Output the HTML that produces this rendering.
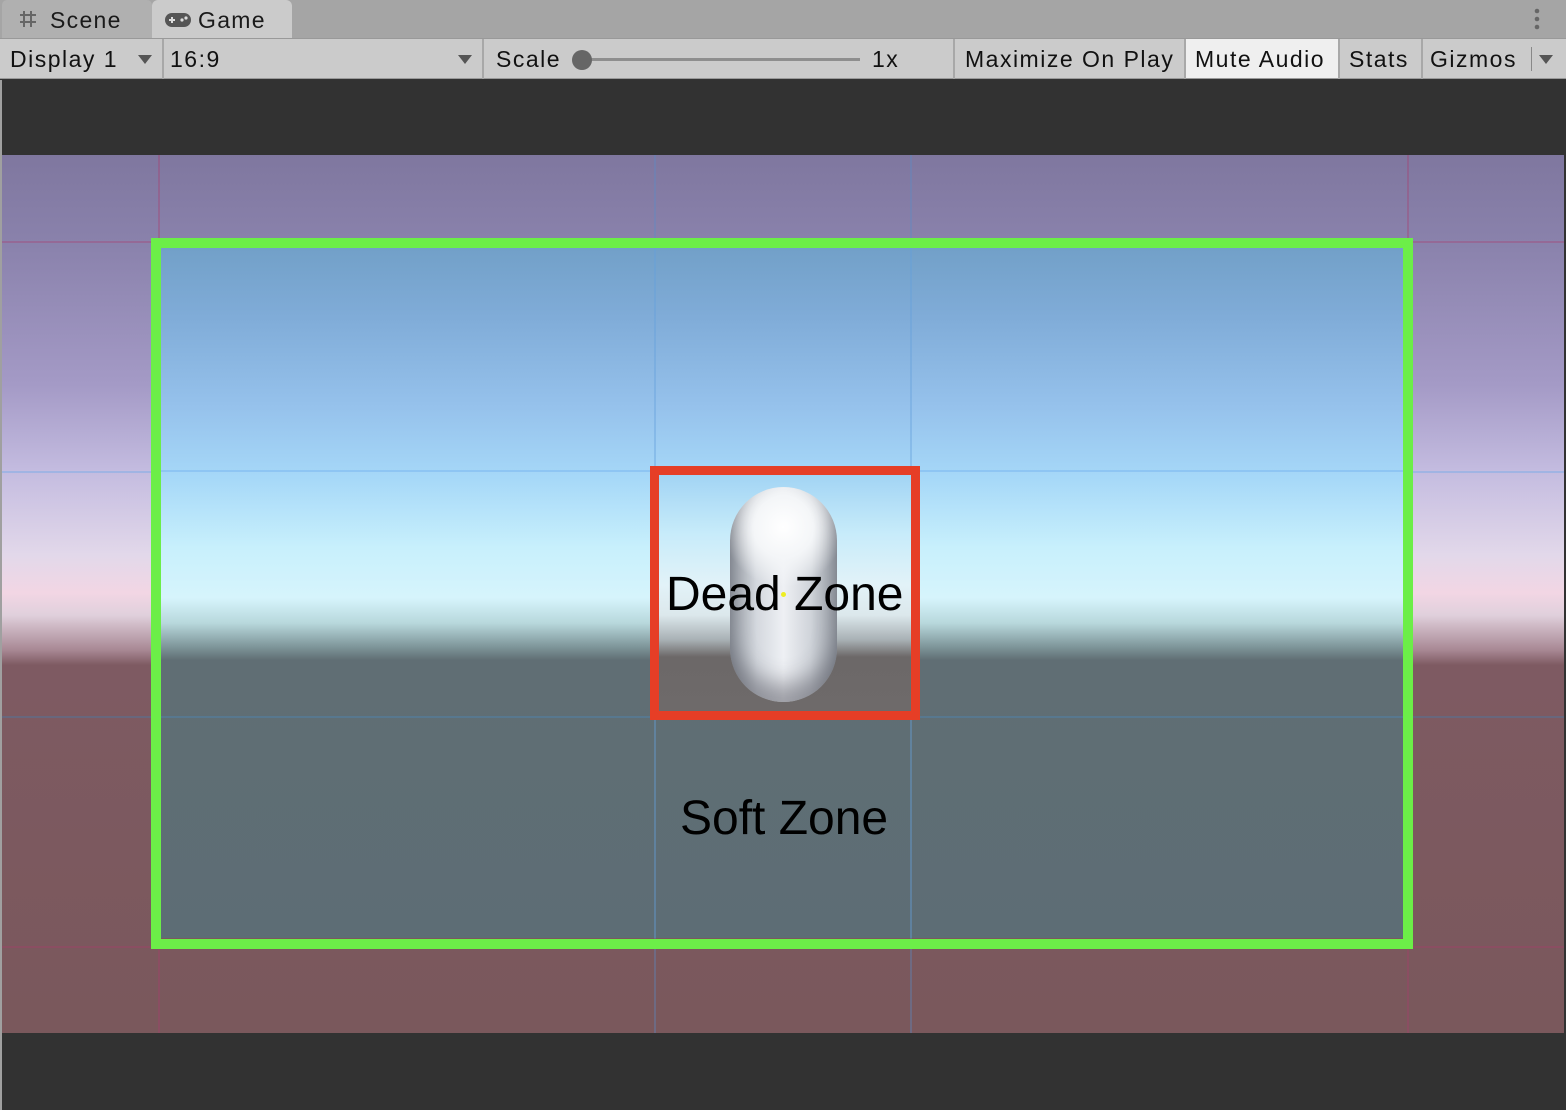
<!DOCTYPE html>
<html><head><meta charset="utf-8"><style>
*{margin:0;padding:0;box-sizing:border-box}
body{width:1566px;height:1110px;overflow:hidden;background:#323232;font-family:"Liberation Sans",sans-serif;position:relative}
.abs{position:absolute}
.tabbar{left:0;top:0;width:1566px;height:38px;background:#a5a5a5}
.tab{top:0;height:38px;font-size:23px;color:#1a1a1a;line-height:40px;letter-spacing:1.3px}
.toolbar{left:0;top:38px;width:1566px;height:41px;background:#cbcbcb;border-top:1px solid #999;border-bottom:1px solid #999}
.t{font-size:23px;color:#111;top:44px;line-height:30px;letter-spacing:1.5px}
.sep{top:39px;width:2px;height:40px;background:#a8a8a8}
.tri{width:0;height:0;border-left:7px solid transparent;border-right:7px solid transparent;border-top:9px solid #555}
.game{left:2px;top:155px;width:1562px;height:878px;background:linear-gradient(to bottom,#7f779f 0px,#8a82ac 90px,#a49ac6 230px,#c4bce0 317px,#e2d8ea 400px,#f2d6e4 438px,#e0d0dc 460px,#a88894 495px,#7e5a62 510px,#7a585c 878px)}
.vl{top:0;width:2px;height:878px;background:rgba(170,60,110,0.35)}
.hl{left:0;height:2px;width:1562px;background:rgba(170,60,110,0.35)}
.inner{left:161px;top:248px;width:1242px;height:690px;overflow:hidden;background:linear-gradient(to bottom,#72a0c8 0px,#80acd8 70px,#96c2ec 160px,#a6d8f8 230px,#c8f0fc 300px,#d6f4fc 350px,#b8d8dc 375px,#80989c 398px,#606e74 412px,#5d6d75 690px)}
.green{left:151px;top:238px;width:1262px;height:711px;border:10px solid #6cee48}
.red{left:650px;top:466px;width:270px;height:254px;border:9px solid #e63e26;overflow:hidden}
.redin{left:0;top:0;width:252px;height:236px;background:linear-gradient(to bottom,#a2d4f4 0px,#c8ecfa 60px,#e2f2f8 110px,#dce8ec 140px,#a8b0b4 165px,#6c6868 182px,#6e6a6a 236px)}
.cap{left:71px;top:12px;width:107px;height:215px;border-radius:54px;background:radial-gradient(ellipse 60px 60px at 50% 40px,#ffffff 0,#f4f6f8 50%,rgba(255,255,255,0) 100%),linear-gradient(to right,#9aa0a8 0,#d4d8de 25%,#eef0f4 50%,#d0d4da 75%,#9aa0a8 100%);box-shadow:inset 0 -18px 22px rgba(60,60,70,0.45)}
.lbl{font-size:48px;color:#000;white-space:nowrap}
</style></head><body>
<div class="abs tabbar"></div>
<div class="abs tab" style="left:2px;width:150px;background:#b0b0b0;border-radius:5px 5px 0 0"></div>
<div class="abs tab" style="left:152px;width:140px;background:#cbcbcb;border-radius:6px 6px 0 0"></div>
<svg class="abs" style="left:18px;top:9px" width="20" height="20" viewBox="0 0 20 20"><path d="M6 2V18M13 2V18M2 6H18M2 13H18" stroke="#666" stroke-width="2" fill="none"/></svg>
<div class="abs tab" style="left:50px">Scene</div>
<svg class="abs" style="left:164px;top:12px" width="28" height="16" viewBox="0 0 28 16"><rect x="1" y="1" width="26" height="14" rx="7" fill="#555"/><path d="M5 8H11M8 5V11" stroke="#ddd" stroke-width="2"/><circle cx="18" cy="8" r="1.6" fill="#ddd"/><circle cx="22" cy="6" r="1.6" fill="#ddd"/></svg>
<div class="abs tab" style="left:198px">Game</div>
<svg class="abs" style="left:1533px;top:8px" width="8" height="22"><circle cx="4" cy="3" r="2.3" fill="#666"/><circle cx="4" cy="11" r="2.3" fill="#666"/><circle cx="4" cy="19" r="2.3" fill="#666"/></svg>
<div class="abs toolbar"></div>
<div class="abs" style="left:1186px;top:39px;width:152px;height:39px;background:#efefef"></div>
<div class="abs t" style="left:10px">Display 1</div>
<div class="abs tri" style="left:138px;top:55px"></div>
<div class="abs sep" style="left:162px"></div>
<div class="abs t" style="left:170px">16:9</div>
<div class="abs tri" style="left:458px;top:55px"></div>
<div class="abs sep" style="left:482px"></div>
<div class="abs t" style="left:496px">Scale</div>
<div class="abs" style="left:580px;top:58px;width:280px;height:3px;background:#8e8e8e"></div>
<div class="abs" style="left:572px;top:50px;width:20px;height:20px;border-radius:50%;background:#666"></div>
<div class="abs t" style="left:872px">1x</div>
<div class="abs sep" style="left:953px"></div>
<div class="abs t" style="left:965px">Maximize On Play</div>
<div class="abs sep" style="left:1184px"></div>
<div class="abs t" style="left:1195px">Mute Audio</div>
<div class="abs sep" style="left:1338px"></div>
<div class="abs t" style="left:1349px">Stats</div>
<div class="abs sep" style="left:1421px"></div>
<div class="abs t" style="left:1430px">Gizmos</div>
<div class="abs" style="left:1531px;top:47px;width:1px;height:24px;background:#888"></div>
<div class="abs tri" style="left:1539px;top:55px"></div>
<div class="abs" style="left:0;top:80px;width:2px;height:1030px;background:#a0a0a0"></div>
<div class="abs game">
<div class="abs vl" style="left:156px"></div><div class="abs vl" style="left:652px;background:rgba(90,140,200,0.35)"></div><div class="abs vl" style="left:908px;background:rgba(90,140,200,0.35)"></div><div class="abs vl" style="left:1405px"></div>
<div class="abs hl" style="top:86px"></div><div class="abs hl" style="top:316px;background:rgba(120,170,230,0.45)"></div><div class="abs hl" style="top:561px;background:rgba(80,120,160,0.45)"></div><div class="abs hl" style="top:791px"></div>
</div>
<div class="abs inner">
<div class="abs" style="left:493px;top:0;width:2px;height:690px;background:rgba(100,160,220,0.4)"></div>
<div class="abs" style="left:749px;top:0;width:2px;height:690px;background:rgba(100,160,220,0.4)"></div>
<div class="abs" style="left:0;top:222px;width:1242px;height:2px;background:rgba(120,180,240,0.5)"></div>
<div class="abs" style="left:0;top:468px;width:1242px;height:2px;background:rgba(80,130,170,0.5)"></div>
</div>
<div class="abs green"></div>
<div class="abs red"><div class="abs redin"><div class="abs cap"></div></div></div>
<div class="abs" style="left:781px;top:592px;width:5px;height:5px;border-radius:50%;background:#ee2"></div>
<div class="abs lbl" style="left:666px;top:567px">Dead Zone</div>
<div class="abs lbl" style="left:680px;top:791px">Soft Zone</div>
</body></html>
